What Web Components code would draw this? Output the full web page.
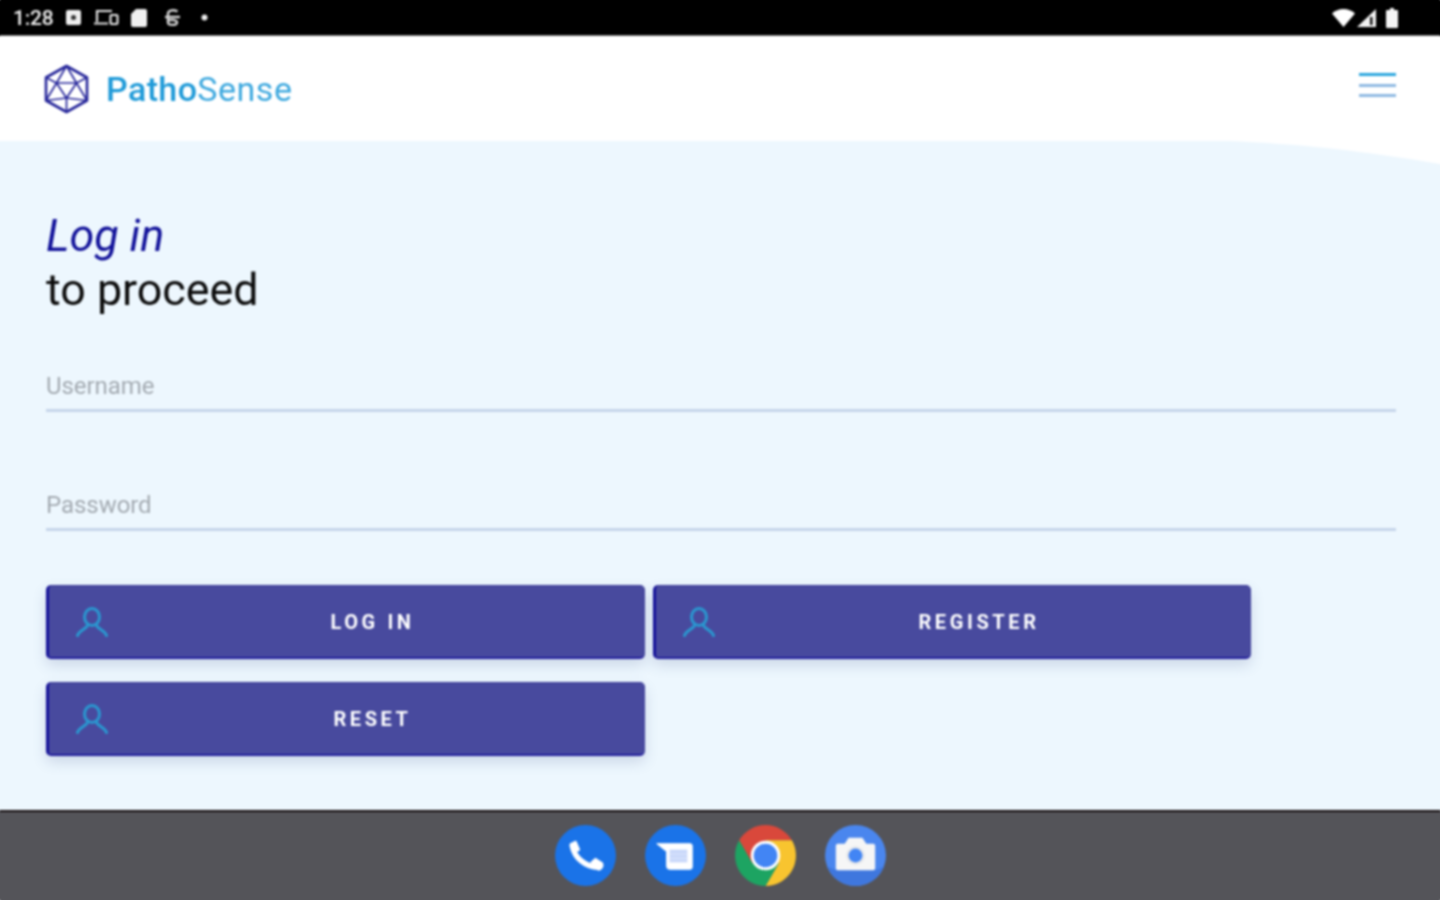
<!DOCTYPE html>
<html lang="en">
<head>
<meta charset="utf-8">
<title>PathoSense</title>
<style>
  html, body {
    margin: 0;
    height: 100%;
    background: #edf7fe;
  }
  body {
    overflow: hidden;
    font-family: Roboto, "Liberation Sans", sans-serif;
  }
</style>
</head>
<body>
<app-shell>
  <status-bar slot="status"></status-bar>
  <app-header slot="header"></app-header>
  <login-form slot="main"></login-form>
  <app-dock slot="dock"></app-dock>
</app-shell>

<script>
function shadow(el, html) {
  el.attachShadow({ mode: "open" }).innerHTML = html;
}

class AppShell extends HTMLElement {
  constructor() {
    super();
    shadow(this, `
      <style>
        :host {
          display: grid;
          grid-template-rows: 36px 105px 669px 90px;
          height: 900px;
          filter: blur(0.8px);
        }
      </style>
      <slot name="status"></slot>
      <slot name="header"></slot>
      <slot name="main"></slot>
      <slot name="dock"></slot>
    `);
  }
}

class StatusBar extends HTMLElement {
  constructor() {
    super();
    shadow(this, `
      <style>
        :host {
          display: flex;
          align-items: center;
          background: #000;
          /* bleed past the window so the blur has no pale rim */
          box-shadow: 0 -8px 0 #000, -8px 0 0 #000, 8px 0 0 #000;
          border-bottom: 1px solid #777;
          box-sizing: border-box;
          padding: 0 42px 0 13px;
          color: #f0f0f0;
          font-size: 21px;
          font-weight: 500;
          letter-spacing: -0.2px;
        }
        .left, .right { display: flex; align-items: center; }
        .right { margin-left: auto; }
        svg { display: block; }
        span { width: 53px; flex: none; }
      </style>
      <div class="left">
        <span>1:28</span>
        <svg width="15" height="15" viewBox="0 0 15 15"><rect width="15" height="15" rx="2" fill="#eee"/><circle cx="7.500" cy="7.500" r="2.500" fill="#333"/></svg>
        <svg style="margin-left:13px" width="25" height="17" viewBox="0 0 25 17" fill="none" stroke="#e4e4e4" stroke-width="2.200"><path d="M3 13V2h15M0 14.500h14"/><rect x="16.500" y="6" width="7" height="9" rx="1"/></svg>
        <svg style="margin-left:12px" width="16" height="18" viewBox="0 0 16 18"><path d="M5 0h9a2 2 0 0 1 2 2v14a2 2 0 0 1-2 2H2a2 2 0 0 1-2-2V5z" fill="#f0f0f0"/></svg>
        <svg style="margin-left:18px" width="15" height="18" viewBox="0 0 15 18" fill="none" stroke="#d8d8d8" stroke-width="2.400"><path d="M12.500 2.500C10 .6 3 .6 3 4.500v9c0 3.200 9 3.200 9 0s-9-3.400-9-1"/><path d="M0 8h15"/></svg>
        <svg style="margin-left:21px" width="7" height="7" viewBox="0 0 7 7"><circle cx="3.500" cy="3.500" r="3" fill="#eee"/></svg>
      </div>
      <div class="right">
        <svg width="23" height="18" viewBox="0 0 23 18"><path d="M0 4.500C6-1.500 17-1.500 23 4.500L11.500 18z" fill="#fff"/></svg>
        <svg style="margin-left:2px" width="19" height="18" viewBox="0 0 19 18"><path d="M19 0v18H0z" fill="#f2f2f2"/><rect x="13" y="8" width="2.500" height="8" fill="#111"/></svg>
        <svg style="margin-left:10px" width="12" height="20" viewBox="0 0 12 20"><path d="M4 0h4v2h3a1 1 0 0 1 1 1v16a1 1 0 0 1-1 1H1a1 1 0 0 1-1-1V3a1 1 0 0 1 1-1h3z" fill="#f4f4f4"/></svg>
      </div>
    `);
  }
}

class AppHeader extends HTMLElement {
  constructor() {
    super();
    shadow(this, `
      <style>
        :host {
          display: flex;
          align-items: center;
          background: #fff;
          box-shadow: -8px 0 0 #fff, 8px 0 0 #fff;
          padding: 0 44px 0 44px;
        }
        .logo { display: flex; align-items: center; gap: 17px; margin-top: 1px; }
        .name {
          font-size: 34px;
          letter-spacing: 0.4px;
          color: #1f9ad8;
          font-weight: 500;
          line-height: 1;
        }
        .name b { font-weight: 400; color: #3fa9df; letter-spacing: 0.5px; }
        .menu { margin-left: auto; margin-top: -7px; display: grid; gap: 7.500px; width: 37px; }
        .menu i { display: block; height: 3px; background: #8fb9e2; }
        .menu i:first-child { background: #2ba6de; }
        svg { display: block; }
      </style>
      <div class="logo">
        <svg width="45" height="50" viewBox="0 0 45 50" fill="none" stroke="#26269a" stroke-linejoin="round">
          <path stroke-width="2.600" d="M22.500 2 43 13.500v23L22.500 48 2 36.500v-23z"/>
          <path stroke-width="1.700" d="M22.500 2 12.500 19h20zM12.500 19l10 15 10-15M12.500 19 2 13.500M32.500 19 43 13.500M12.500 19 2 36.500M32.500 19 43 36.500M22.500 34 2 36.500M22.500 34 43 36.500M22.500 34v14"/>
        </svg>
        <div class="name">Patho<b>Sense</b></div>
      </div>
      <div class="menu"><i></i><i></i><i></i></div>
    `);
  }
}

class LoginForm extends HTMLElement {
  constructor() {
    super();
    shadow(this, `
      <style>
        :host {
          display: block;
          position: relative;
          background: #edf7fe;
          box-shadow: -8px 0 0 #edf7fe, 8px 0 0 #edf7fe;
          padding: 68px 44px 0 46px;
        }
        .curve { position: absolute; top: 0; right: -8px; display: block; }
        h1 {
          margin: 0 0 38px;
          font-size: 44.800px;
          line-height: 54px;
          font-weight: 400;
          color: #0c0c0c;
        }
        em { display: block; color: #12129a; }
        .fields { display: grid; gap: 62px; margin-bottom: 54px; }
        .buttons {
          display: grid;
          grid-template-columns: 599px 598px;
          gap: 23px 8px;
        }
      </style>
      <svg class="curve" width="218" height="25" viewBox="0 0 218 25"><path d="M0 0H218V24.200C150 13 90 4 0 0z" fill="#fff"/></svg>
      <h1><em>Log in</em>to proceed</h1>
      <div class="fields">
        <text-field>Username</text-field>
        <text-field>Password</text-field>
      </div>
      <div class="buttons">
        <icon-button>LOG IN</icon-button>
        <icon-button>REGISTER</icon-button>
        <icon-button>RESET</icon-button>
      </div>
    `);
  }
}

class TextField extends HTMLElement {
  constructor() {
    super();
    shadow(this, `
      <style>
        :host {
          height: 57px;
          box-sizing: border-box;
          border-bottom: 3px solid #c6d5ea;
          display: flex;
          align-items: flex-end;
          padding-bottom: 9px;
          font-size: 24px;
          line-height: 27px;
          letter-spacing: -0.05px;
          color: #a3aab1;
        }
      </style>
      <slot></slot>
    `);
  }
}

class IconButton extends HTMLElement {
  constructor() {
    super();
    shadow(this, `
      <style>
        :host {
          display: flex;
          align-items: center;
          box-sizing: border-box;
          height: 74px;
          padding: 0 7px 0 27px;
          background: #484a9e;
          border-left: 3px solid #15129a;
          border-bottom: 2px solid #221e9c;
          border-top: 1px solid #3f3e9c;
          border-right: 1px solid #43449e;
          border-radius: 5px;
          box-shadow: 0 6px 14px rgba(70, 90, 140, .2);
          color: #fff;
          font-size: 20px;
          font-weight: 700;
          letter-spacing: 3.600px;
        }
        svg { flex: none; display: block; }
        span { flex: 1; text-align: center; }
      </style>
      <svg width="32" height="30" viewBox="0 0 32 30" fill="none" stroke="#2a97d0" stroke-width="3" stroke-linecap="round">
        <ellipse cx="16" cy="10" rx="7.500" ry="8.500"/>
        <path d="M11.500 18C11 22 3 23 1.500 28.500M20.500 18C21 22 29 23 30.500 28.500"/>
      </svg>
      <span><slot></slot></span>
    `);
  }
}

class AppDock extends HTMLElement {
  constructor() {
    super();
    shadow(this, `
      <style>
        :host {
          display: flex;
          justify-content: center;
          align-items: center;
          gap: 29px;
          background: #545459;
          box-shadow: 0 8px 0 #545459, -8px 0 0 #545459, 8px 0 0 #545459;
          border-top: 2px solid #140c0e;
          box-sizing: border-box;
          padding: 0 0 2px 1px;
        }
        svg { display: block; }
      </style>
      <svg width="61" height="61" viewBox="0 0 62 62">
        <circle cx="31" cy="31" r="31" fill="#1a73e8"/>
        <path d="M17.500 21C20 34 31 42 43 43" fill="none" stroke="#fff" stroke-width="5.500" stroke-linecap="round"/>
        <path d="M16 19.500l5-2.500 3.500 8-5 3zM37 38l4-3.500 7 4.500c1 3-1 6-3.500 6.500z" fill="#fff" stroke="#fff" stroke-width="2" stroke-linejoin="round"/>
      </svg>
      <svg width="61" height="61" viewBox="0 0 62 62">
        <circle cx="31" cy="31" r="31" fill="#1a73e8"/>
        <path d="M12 19H46a2 2 0 0 1 2 2V43a2 2 0 0 1-2 2H25a3 3 0 0 1-3-3V27z" fill="#fff" stroke="#fff" stroke-linejoin="round"/>
        <rect x="25" y="25" width="18" height="13" fill="#c9d8fa"/>
        <path d="M25 29.500h18M25 34h18" stroke="#dfe8fc" stroke-width="1"/>
      </svg>
      <svg width="61" height="61" viewBox="0 0 62 62">
        <path d="M4.200 15.500A31 31 0 0 1 57.800 15.500L31 15.500 17.600 38.750z" fill="#d9483b"/>
        <path d="M57.800 15.500A31 31 0 0 1 31 62L44.400 38.750 31 15.500z" fill="#f8c42f"/>
        <path d="M31 62A31 31 0 0 1 4.200 15.500L17.600 38.750 44.400 38.750z" fill="#1da462"/>
        <circle cx="31" cy="31" r="15" fill="#fff"/>
        <circle cx="31" cy="31" r="12" fill="#4285f4"/>
      </svg>
      <svg width="61" height="61" viewBox="0 0 62 62">
        <circle cx="31" cy="31" r="31" fill="#4a86ee"/>
        <path d="M31 62A31 31 0 0 0 60 42L52 46H11L2 42A31 31 0 0 0 31 62z" fill="#3f77de"/>
        <path d="M13 19h7l4-6h14l4 6h7a2 2 0 0 1 2 2v23a2 2 0 0 1-2 2H13a2 2 0 0 1-2-2V21a2 2 0 0 1 2-2z" fill="#f6f6f6"/>
        <circle cx="31" cy="31" r="9.500" fill="#e4e6ea"/>
        <circle cx="31" cy="31" r="7" fill="#4285f4"/>
      </svg>
    `);
  }
}

customElements.define("app-shell", AppShell);
customElements.define("status-bar", StatusBar);
customElements.define("app-header", AppHeader);
customElements.define("login-form", LoginForm);
customElements.define("text-field", TextField);
customElements.define("icon-button", IconButton);
customElements.define("app-dock", AppDock);
</script>
</body>
</html>
